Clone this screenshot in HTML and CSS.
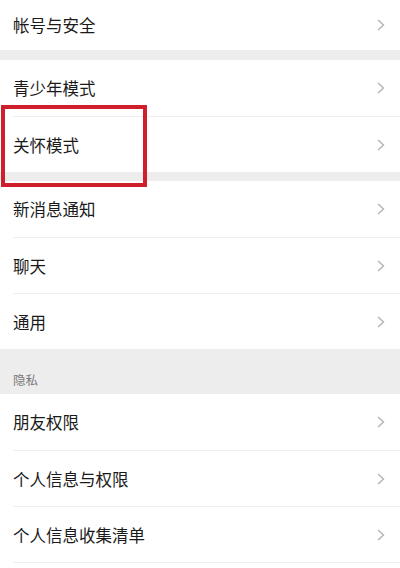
FILE: index.html
```html
<!DOCTYPE html>
<html lang="zh-CN">
<head>
<meta charset="utf-8">
<link rel="stylesheet" href="styles.css">
</head>
<body>
<div class="page">
  <div class="group">
    <div class="row row-first"><span class="label">帐号与安全</span><span class="chev"><svg viewBox="0 0 8 12" width="8" height="12"><path d="M1 1 L6.5 6 L1 11" fill="none" stroke="#b3b3b3" stroke-width="1.4"/></svg></span></div>
  </div>
  <div class="band band-a"></div>
  <div class="group">
    <div class="row"><span class="label">青少年模式</span><span class="chev"><svg viewBox="0 0 8 12" width="8" height="12"><path d="M1 1 L6.5 6 L1 11" fill="none" stroke="#b3b3b3" stroke-width="1.4"/></svg></span></div>
    <div class="row"><span class="label">关怀模式</span><span class="chev"><svg viewBox="0 0 8 12" width="8" height="12"><path d="M1 1 L6.5 6 L1 11" fill="none" stroke="#b3b3b3" stroke-width="1.4"/></svg></span></div>
  </div>
  <div class="band band-b"></div>
  <div class="group">
    <div class="row"><span class="label">新消息通知</span><span class="chev"><svg viewBox="0 0 8 12" width="8" height="12"><path d="M1 1 L6.5 6 L1 11" fill="none" stroke="#b3b3b3" stroke-width="1.4"/></svg></span></div>
    <div class="row"><span class="label">聊天</span><span class="chev"><svg viewBox="0 0 8 12" width="8" height="12"><path d="M1 1 L6.5 6 L1 11" fill="none" stroke="#b3b3b3" stroke-width="1.4"/></svg></span></div>
    <div class="row"><span class="label">通用</span><span class="chev"><svg viewBox="0 0 8 12" width="8" height="12"><path d="M1 1 L6.5 6 L1 11" fill="none" stroke="#b3b3b3" stroke-width="1.4"/></svg></span></div>
  </div>
  <div class="section-head">隐私</div>
  <div class="group">
    <div class="row"><span class="label">朋友权限</span><span class="chev"><svg viewBox="0 0 8 12" width="8" height="12"><path d="M1 1 L6.5 6 L1 11" fill="none" stroke="#b3b3b3" stroke-width="1.4"/></svg></span></div>
    <div class="row"><span class="label">个人信息与权限</span><span class="chev"><svg viewBox="0 0 8 12" width="8" height="12"><path d="M1 1 L6.5 6 L1 11" fill="none" stroke="#b3b3b3" stroke-width="1.4"/></svg></span></div>
    <div class="row"><span class="label">个人信息收集清单</span><span class="chev"><svg viewBox="0 0 8 12" width="8" height="12"><path d="M1 1 L6.5 6 L1 11" fill="none" stroke="#b3b3b3" stroke-width="1.4"/></svg></span></div>
    <div class="row row-tail"></div>
  </div>
  <div class="highlight"></div>
</div>
</body>
</html>
```

FILE: styles.css
```css
html, body {
  margin: 0;
  padding: 0;
  background: #ffffff;
}
.page {
  position: relative;
  width: 400px;
  height: 568px;
  overflow: hidden;
  font-family: "Noto Sans CJK SC", "Noto Sans", sans-serif;
}
.group {
  background: #ffffff;
}
.row {
  height: 56px;
  display: flex;
  align-items: center;
  justify-content: space-between;
  padding: 0 13px 0 13px;
  position: relative;
}
.row + .row {
  border-top: 1px solid transparent;
  height: 55px;
}
.row + .row::before {
  content: "";
  position: absolute;
  left: 13px;
  right: 0;
  top: -1px;
  height: 1px;
  background: #efefef;
}
.row-first {
  height: 50px;
}
.row-tail {
  height: 20px;
}
.row + .row-tail {
  height: 20px;
}
.label {
  font-size: 16.5px;
  color: #1a1a1a;
  letter-spacing: 0;
}
.chev {
  display: flex;
  align-items: center;
  width: 8px;
  margin-right: 2px;
}
.band {
  background: #ededed;
}
.band-a {
  height: 10px;
}
.band-b {
  height: 9px;
}
.section-head {
  background: #ededed;
  height: 45px;
  box-sizing: border-box;
  padding: 23px 13px 0;
  font-size: 12.5px;
  line-height: 16px;
  color: #7a7a7a;
}
.highlight {
  position: absolute;
  left: 1px;
  top: 105px;
  width: 138px;
  height: 74px;
  border: 4px solid #cf1f2d;
}
```
